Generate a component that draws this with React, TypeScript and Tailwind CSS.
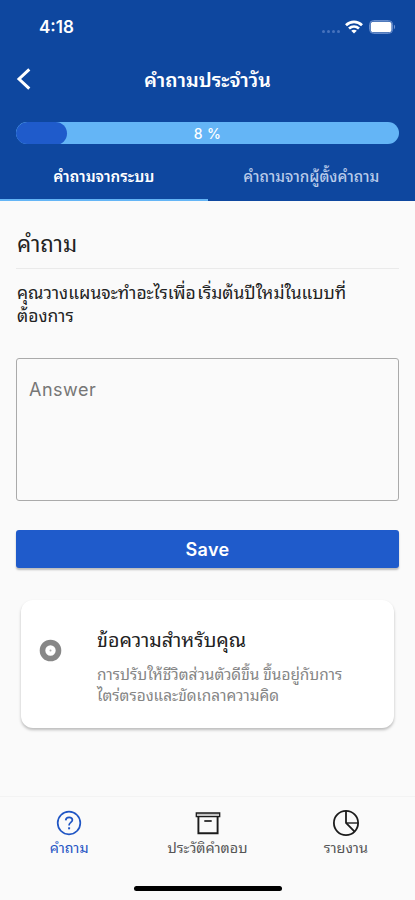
import type { ReactNode } from 'react';

const progress = 8;

const tabs = [
    { label: 'คำถามจากระบบ', active: true },
    { label: 'คำถามจากผู้ตั้งคำถาม', active: false },
];

const QuestionIcon = () => (
    <svg width="26" height="26" viewBox="0 0 26 26" fill="none" stroke="currentColor" strokeWidth="1.7">
        <circle cx="13" cy="13" r="11.3" />
        <path d="M9.7 10.4c.1-2 1.5-3.1 3.4-3.1 1.9 0 3.3 1.1 3.3 2.8 0 2.3-3.3 2.4-3.3 5v.5" />
        <path d="M13.1 17.3v2" strokeWidth="2" />
    </svg>
);

const ArchiveIcon = () => (
    <svg className="ml-px" width="26" height="26" viewBox="0 0 26 26" fill="none" stroke="currentColor" strokeWidth="1.9">
        <path d="M1.3 3h23.4v3.7H1.3z" fill="#c4c4c4" strokeWidth="1.3" />
        <path d="M3.4 6.7v16.5h19.2V6.7" />
        <path d="M9.3 11h7.4" strokeWidth="1.7" />
    </svg>
);

const PieIcon = () => (
    <svg width="28" height="28" viewBox="0 0 28 28" fill="none" stroke="currentColor" strokeWidth="1.8">
        <circle cx="14" cy="14" r="12.1" />
        <path d="M14 2v12l8.6 8.6" />
        <path d="M14 14h12" strokeWidth="1.4" />
    </svg>
);

const NavItem = ({ icon, label, active }: { icon: ReactNode, label: string, active?: boolean }) => (
    <button className={`flex flex-1 flex-col items-center ${active ? 'text-[#1f55c4]' : 'text-[#1c1c1c]'}`}>
        <span className="flex h-7 items-center">{icon}</span>
        <span className={`h-5 whitespace-nowrap text-[14.4px] leading-5 ${active ? '' : 'text-[#555]'}`}>{label}</span>
    </button>
);

const StatusBar = () => (
    <div className="flex h-[54px] items-center justify-between pr-[19px] pl-[39px] text-white">
        <span className="pt-px font-['Inter'] text-[17px] font-semibold">4:18</span>
        <div className="flex items-center">
            <div className="mt-2 mr-[5px] flex gap-[2px]">
                {[0, 1, 2, 3].map((dot) => (
                    <span key={dot} className="size-[3px] rounded-full bg-[#4773bd]" />
                ))}
            </div>
            <svg width="18" height="14" viewBox="0 0 18 14" fill="none" stroke="currentColor" strokeWidth="2.7">
                <path d="M1 5.2C5.6.7 12.4.7 17 5.2" />
                <path d="M4 8.6c3-2.7 7-2.7 10 0" />
                <path d="M9 13.6 6.2 10.8c1.6-1.5 4-1.5 5.6 0z" fill="currentColor" stroke="none" />
            </svg>
            <svg className="ml-[6px]" width="27" height="14" viewBox="0 0 27 14">
                <rect x=".6" y=".6" width="23" height="12.8" rx="4" fill="none" stroke="#6f93d0" strokeWidth="1" />
                <rect x="1.7" y="1.8" width="20.8" height="10.4" rx="2.8" fill="#fff" />
                <path d="M25 4.8c1.5.6 1.5 3.8 0 4.4z" fill="#6f93d0" />
            </svg>
        </div>
    </div>
);

export default function App() {
    return (
        <div className="flex h-[900px] w-[415px] flex-col overflow-hidden bg-[#fafafa] font-['Noto_Sans_Thai_Looped','Loma','Garuda','Sarabun','Waree','Umpush','Tahoma',sans-serif] text-[#222]">
            <header className="flex h-[201px] shrink-0 flex-col bg-[#0e479f]">
                <StatusBar />
                <div className="grid h-[52px] grid-cols-[60px_1fr_60px] items-center text-white">
                    <button className="pb-[2px] pl-4">
                        <svg width="16" height="24" viewBox="0 0 16 24" fill="none" stroke="currentColor" strokeWidth="3">
                            <path d="M13.3 2.3 3 12l10.3 9.7" />
                        </svg>
                    </button>
                    <h1 className="whitespace-nowrap pb-[3px] text-center text-[19.7px] font-semibold">คำถามประจำวัน</h1>
                </div>
                <div className="mx-4 mt-4 grid h-[22px] overflow-hidden rounded-full bg-[#64b5f6]">
                    <div className="col-start-1 row-start-1 w-[51px] rounded-full bg-[#1f5bcb]" />
                    <span className="col-start-1 row-start-1 pt-px text-center font-['Inter'] text-[14px] leading-[22px] font-medium tracking-[0.3px] text-white">
                        {progress} %
                    </span>
                </div>
                <div className="mt-2 flex h-[49px]">
                    {tabs.map((tab) => (
                        <button
                            key={tab.label}
                            className={`flex-1 border-b-2 text-[15.3px] whitespace-nowrap ${tab.active ? 'border-[#64b5f6] font-semibold text-white' : 'border-transparent font-medium text-[#b9cbea]'}`}
                        >
                            {tab.label}
                        </button>
                    ))}
                </div>
            </header>

            <main className="flex flex-1 flex-col px-4">
                <h2 className="mt-[25px] h-[43px] border-b border-[#eaeaea] pl-px text-[22.3px] leading-8">คำถาม</h2>
                <p className="mt-[11px] h-[50px] pl-px text-[17.5px] leading-[23px] whitespace-nowrap [word-spacing:-3px]">
                    คุณวางแผนจะทำอะไรเพื่อ เริ่มต้นปีใหม่ในแบบที่
                    <br />
                    ต้องการ
                </p>
                <textarea
                    className="mt-[28px] block h-[143px] w-full resize-none rounded-[3px] border border-[#aaa] px-3 py-[17px] font-['Inter'] text-[18px] leading-7 tracking-[0.5px] outline-none placeholder:text-[#767676]"
                    placeholder="Answer"
                />
                <button className="mt-[29px] h-[38px] rounded-[3px] bg-[#1f5bcb] font-['Inter'] text-[18px] font-semibold tracking-[0.3px] text-white shadow-[0_2px_2px_rgba(0,0,0,0.25)]">
                    Save
                </button>
                <section className="mx-[5px] mt-[32px] flex h-[128px] rounded-xl bg-white shadow-[0_2px_3px_rgba(0,0,0,0.25)]">
                    <div className="w-[76px] pt-[39px] pl-[18px]">
                        <svg width="23" height="23" viewBox="0 0 23 23">
                            <circle cx="11.5" cy="11.5" r="8" fill="none" stroke="#878787" strokeWidth="5.6" />
                            <circle cx="11.5" cy="11.5" r="1" fill="#aaa" />
                        </svg>
                    </div>
                    <div className="pt-[24px] whitespace-nowrap">
                        <h3 className="text-[19.7px] leading-7">ข้อความสำหรับคุณ</h3>
                        <p className="mt-[11px] text-[15.4px] leading-[20.5px] text-[#858585]">
                            การปรับให้ชีวิตส่วนตัวดีขึ้น ขึ้นอยู่กับการ
                            <br />
                            ไตร่ตรองและขัดเกลาความคิด
                        </p>
                    </div>
                </section>
            </main>

            <footer className="flex h-[104px] shrink-0 flex-col border-t border-[#f3f3f3]">
                <nav className="flex h-[89px] pt-3">
                    <NavItem icon={<QuestionIcon />} label="คำถาม" active />
                    <NavItem icon={<ArchiveIcon />} label="ประวัติคำตอบ" />
                    <NavItem icon={<PieIcon />} label="รายงาน" />
                </nav>
                <div className="mx-auto h-[5px] w-[148px] shrink-0 rounded-full bg-black" />
            </footer>
        </div>
    );
}
